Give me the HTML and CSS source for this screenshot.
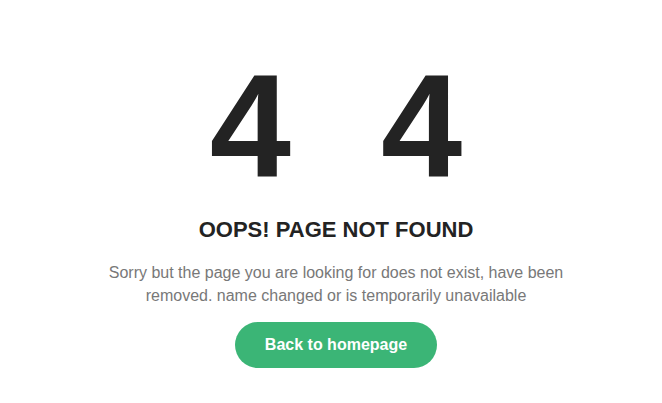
FILE: index.html
```html
<!DOCTYPE html>
<html lang="en">
<head>
<meta charset="utf-8">
<title>404 - Page not found</title>
<link rel="stylesheet" href="styles.css">
</head>
<body>
<main class="page">
  <div class="notfound">
    <h1 class="code">4<span class="code-gap"></span>4</h1>
    <h2 class="title">Oops! Page Not Found</h2>
    <p class="desc">Sorry but the page you are looking for does not exist, have been removed. name changed or is temporarily unavailable</p>
    <a class="home-btn" href="#">Back to homepage</a>
  </div>
</main>
</body>
</html>
```
FILE: styles.css
```css
* { box-sizing: border-box; }
html, body { margin: 0; padding: 0; background: #fff; }
body { font-family: "Liberation Sans", Arial, sans-serif; }

.page {
  height: 403px;
  display: flex;
  justify-content: center;
  padding-top: 54px;
  padding-left: 10px;
}

.notfound {
  width: 470px;
  display: flex;
  flex-direction: column;
  align-items: center;
  text-align: center;
}

.code {
  margin: 0;
  font-size: 146px;
  line-height: 146px;
  font-weight: 700;
  color: #232323;
  display: flex;
  align-items: flex-end;
}

.code-gap {
  display: inline-block;
  width: 90px;
  height: 1px;
}

.title {
  margin: 17px 0 0;
  font-size: 22px;
  line-height: 26px;
  font-weight: 700;
  text-transform: uppercase;
  color: #232323;
}

.desc {
  margin: 18px 0 0;
  font-size: 16px;
  line-height: 23px;
  color: #787878;
}

.home-btn {
  margin-top: 15px;
  display: inline-block;
  width: 202px;
  height: 46px;
  line-height: 46px;
  border-radius: 23px;
  background: #3bb576;
  color: #fff;
  font-size: 16px;
  font-weight: 700;
  text-decoration: none;
}
```
